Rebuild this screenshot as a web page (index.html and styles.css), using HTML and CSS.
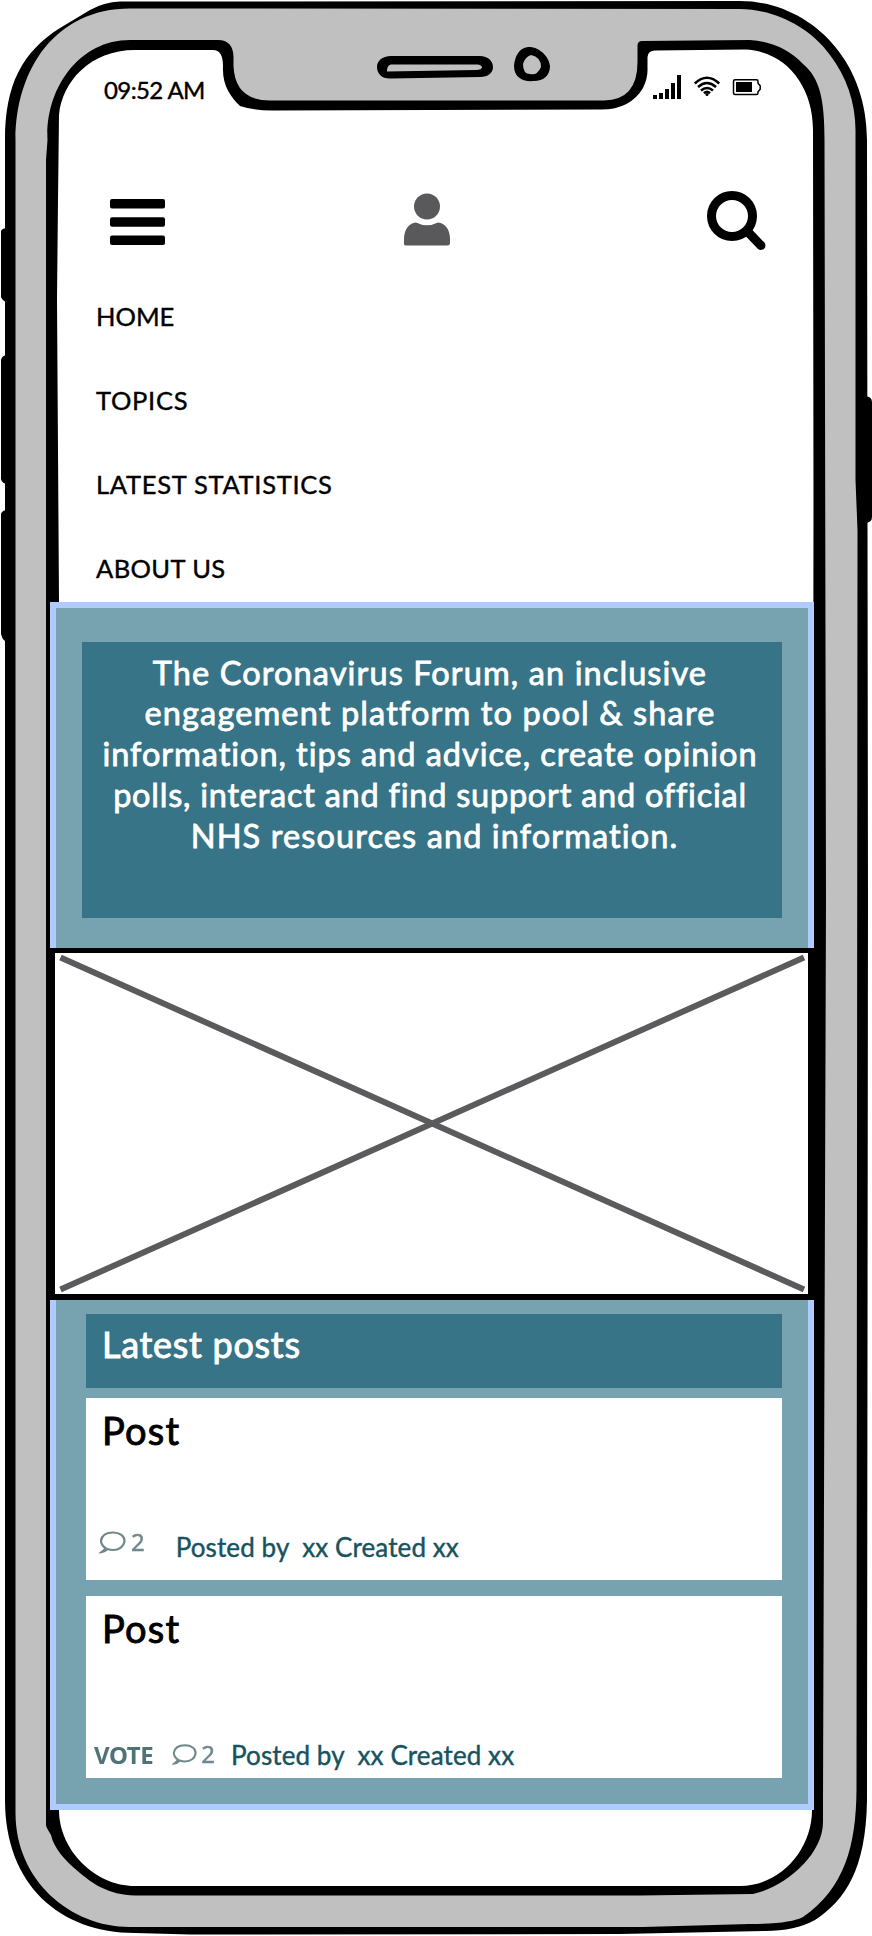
FILE: index.html
```html
<!DOCTYPE html>
<html lang="en">
<head>
<meta charset="utf-8">
<title>The Coronavirus Forum</title>
<link rel="stylesheet" href="styles.css">
</head>
<body>
<div class="phone">
<svg class="frame" viewBox="0 0 872 1936" width="872" height="1936" aria-hidden="true">
  <path d="M1 231Q2 228 8 228V302Q3 302 1 297ZM1 360Q2 355 8 355V484Q2 484 1 479ZM1 514Q2 510 8 510V642Q3 642 1 634ZM864 396Q872 396 872 402V517Q872 523 864 523Z"/>
  <path d="M5 140C5 85 22 52 60 28L90 10Q104 2 120 1.500L740 1C805 1 867 55 867 140L868 900L867 1800C866 1870 845 1900 815 1920Q795 1931 765 1931L620 1934L190 1934.500L135 1933C60 1933 5 1885 5 1800Z"/>
  <path fill="#c0c0c0" d="M15.500 140C15.500 70 55 8.500 130 8.500L740 9C770 9 808 24 830 55Q855 88 855.500 130L855.500 480L857.500 530L856.500 1790C856 1845 845 1888 803 1917Q790 1924 749 1924L643 1927H130C70 1927 15.500 1880 15.500 1813Z"/>
  <path d="M47.500 140C45 90 78 40 130 40H218Q233 40 233.500 57V66Q235 100.500 270 100.500H604Q637.500 100 637.500 62V45Q638 41 642 41L750 40Q782 42 803 64C820 78 824.500 100 824.500 140L826 900L823 1800V1822C823 1855 785 1887 753 1894L640 1895.500H135C108 1895 92 1883 80 1873Q55 1853 51 1835Q46 1827 46 1825V160Z"/>
  <path fill="#fff" d="M58 200L59 115C62 82 90 50 135 50H213Q223 50 223 66C222 86 231 97 240 106Q255 111 275 110.500L600 109.500Q630 110 643 88Q648 78 647.500 68V57Q648 50.500 655 50.500L745 49.500C785 51 813 85 813 130L813.500 500L812 1810C812 1850 780 1886 740 1886H135C95 1886 59 1850 59 1810V600L57 300Z"/>
  <path fill-rule="evenodd" d="M391 56H480C488 56 493 61 493 67C493 73 488 77 480 77L391 78.500C382 79 377 74 377 67C377 61 382 56 391 56ZM391 64.500Q387 65 387 71.500L476 70Q482 70 482 67Q481 64 476 64.500Z"/>
  <path fill-rule="evenodd" d="M528 47C537 46 549 55 550 66C550 76 543 81 534 81C522 82 514 77 514 66C515 56 519 48 528 47ZM531 55Q525 57 523 64Q523 74 530 74Q537 76 541 67Q541 57 531 55Z"/>
</svg>
<main class="screen">
  <header class="status">
    <time class="time">09:52 AM</time>
    <svg class="status-icons" width="110" height="26" viewBox="0 0 110 26">
      <path d="M0 20h4v4H0zM6 18h4v6H6zM12 14h4v10h-4zM18 8h4v16h-4zM24 0h4v24h-4z"/>
      <g fill="none" stroke="#000" stroke-width="2.600"><path d="M41.800 8.500Q54 -3 66.200 8.500M45 12Q54 4 63 12M48 15.500Q54 10.500 60 15.500M51 18.300Q54 15.500 57 18.300"/></g><circle cx="54" cy="19.500" r="1.500"/>
      <path d="M82 4.800h21.500q1.500 0 1.500 1.500v1.900l2.200 2.500v3.600l-2.200 2.500v1.200q0 1.500-1.500 1.500H82q-1.500 0-1.500-1.500V6.300q0-1.500 1.500-1.500z" fill="#fff" stroke="#000" stroke-width="1.500"/><path d="M83 7h16v10H83z"/>
    </svg>
  </header>
  <nav class="toolbar">
    <svg width="56" height="48" viewBox="0 0 56 48"><rect y="1" width="55" height="9.500" rx="2"/><rect y="19.300" width="55" height="9.500" rx="2"/><rect y="37.600" width="55" height="9.500" rx="2"/></svg>
    <svg class="user" width="50" height="58" viewBox="0 0 50 58" fill="#59595b"><circle cx="25" cy="14.500" r="13"/><path d="M2 52V46Q3 32 14 30.500Q25 36 36 30.500Q47 32 48 46V51Q48 53.500 45 53.500H5Q2 53.500 2 52Z"/></svg>
    <svg class="search" width="62" height="62" viewBox="0 0 62 62" fill="none" stroke="#000"><circle cx="26" cy="26" r="20.500" stroke-width="9"/><path d="M41 41L55 55.500" stroke-width="9" stroke-linecap="round"/></svg>
  </nav>
  <ul class="menu">
    <li>HOME</li>
    <li>TOPICS</li>
    <li>LATEST STATISTICS</li>
    <li>ABOUT US</li>
  </ul>
  <section class="hero">
    <p class="intro">
      <span class="line l1">The Coronavirus Forum, an inclusive</span>
      <span class="line l2">engagement platform to pool &amp; share</span>
      <span class="line l3">information, tips and advice, create opinion</span>
      <span class="line l4">polls, interact and find support and official</span>
      <span class="line l5">NHS resources and information.</span>
    </p>
  </section>
  <figure class="picture"><svg width="753" height="341" viewBox="0 0 753 341"><path d="M5.500 4.500L749 336.500M5.500 336.500L749 4.500" stroke="#5b5a5c" stroke-width="6"/></svg></figure>
  <section class="posts">
    <h2 class="heading">Latest posts</h2>
    <article class="post">
      <h3>Post</h3>
      <footer class="meta first"><svg class="bubble" width="27" height="24" viewBox="0 0 27 24"><path d="M6.500 17Q2 14 2 9.500C3 4 8 1.500 14 1.500C21 1.500 25.500 5 25.500 10C25 15.500 20 19 14 19Q11 19 8.500 18Q5.500 21 2.500 21.200Q6 18.500 6.500 17Z"/></svg><span class="count">2</span><span class="by">Posted by&nbsp; xx Created xx</span></footer>
    </article>
    <article class="post">
      <h3>Post</h3>
      <footer class="meta second"><span class="vote">VOTE</span><svg class="bubble" width="25" height="24" viewBox="0 0 27 24"><path d="M6.500 17Q2 14 2 9.500C3 4 8 1.500 14 1.500C21 1.500 25.500 5 25.500 10C25 15.500 20 19 14 19Q11 19 8.500 18Q5.500 21 2.500 21.200Q6 18.500 6.500 17Z"/></svg><span class="count">2</span><span class="by">Posted by&nbsp; xx Created xx</span></footer>
    </article>
  </section>
</main>
</div>
</body>
</html>
```
FILE: styles.css
```css
* { box-sizing: border-box; }
body { margin: 0; background: #fff; color: #000; font-family: Lato, "Open Sans", sans-serif; }
.phone { position: relative; width: 872px; height: 1936px; overflow: hidden; }
.frame { position: absolute; inset: 0; }
.screen { position: relative; width: 764px; margin-left: 50px; -webkit-text-stroke: .4px currentColor; }
svg { display: block; flex: none; }
.status { display: flex; justify-content: space-between; align-items: flex-start; height: 189px; padding: 75px 51px 0 54px; }
.time { font-size: 24px; line-height: 30px; letter-spacing: -.6px; }
.toolbar { display: flex; justify-content: space-between; align-items: flex-start; height: 85px; padding: 9px 46px 0 60px; }
.user { filter: blur(.7px); margin: -6px 18px 0 0; }
.search { margin-top: -8px; }
.menu { list-style: none; margin: 0; padding: 0 0 0 46px; height: 328px; font-size: 25.500px; line-height: 84px; letter-spacing: .7px; }
.menu li { height: 84px; }
.menu li:first-child { letter-spacing: 0; }
.menu li:last-child { letter-spacing: .4px; }
.hero { height: 346px; padding: 34px 26px 0 26px; background: #77a3b0; border: 6px solid #b0cbff; border-bottom: 0; }
.intro { margin: 0; height: 276px; padding: 10.700px 4px 0 0; background: #377487; color: #fff; text-align: center; font-size: 32.500px; line-height: 40.700px; -webkit-text-stroke-width: .8px; }
.line { display: block; white-space: pre; }
.l1 { letter-spacing: 1.100px; }
.l2 { letter-spacing: 1.140px; }
.l3 { letter-spacing: .960px; }
.l4 { letter-spacing: .760px; }
.l5 { letter-spacing: 1.100px; padding-left: 9px; }
.picture { margin: 0; height: 352px; background: #fff; border: 5px solid #000; border-width: 5px 6px 6px 5px; }
.posts { height: 510px; padding: 14px 26px 0 30px; background: #77a3b0; border: 6px solid #b0cbff; border-top: 0; display: flex; flex-direction: column; }
.heading { margin: 0 0 10px; height: 74px; padding: 8px 16px; background: #377487; color: #fff; font-weight: 400; font-size: 36px; line-height: 44px; letter-spacing: .700px; -webkit-text-stroke-width: .9px; }
.post { height: 182px; margin-bottom: 16px; background: #fff; display: flex; flex-direction: column; justify-content: space-between; }
.post h3 { margin: 0; padding: 9px 16px; font-weight: 400; font-size: 38px; line-height: 46px; letter-spacing: 1.200px; -webkit-text-stroke-width: .9px; }
.meta { display: flex; align-items: flex-start; height: 60px; }
.first { padding-left: 13px; }
.second { padding-left: 8px; }
.bubble { fill: none; stroke: #71888a; stroke-width: 2.200px; filter: blur(.5px); }
.count { font-family: "Noto Sans", sans-serif; font-size: 24px; line-height: 30px; color: #71888a; filter: blur(.5px); }
.vote { font-family: "Noto Sans", sans-serif; font-weight: 700; font-size: 24px; line-height: 30px; letter-spacing: -.400px; color: #4f7477; filter: blur(.6px); -webkit-text-stroke-width: 0; }
.by { color: #17535f; font-size: 26px; line-height: 32px; letter-spacing: .100px; white-space: pre; }
.first .bubble { margin-top: 11px; }
.first .count { margin: 7px 31px 0 5px; }
.first .by { margin-top: 11px; }
.second .vote { margin: 22px 19px 0 0; }
.second .bubble { margin-top: 25px; }
.second .count { margin: 21px 16px 0 4px; }
.second .by { margin-top: 21px; }
```
